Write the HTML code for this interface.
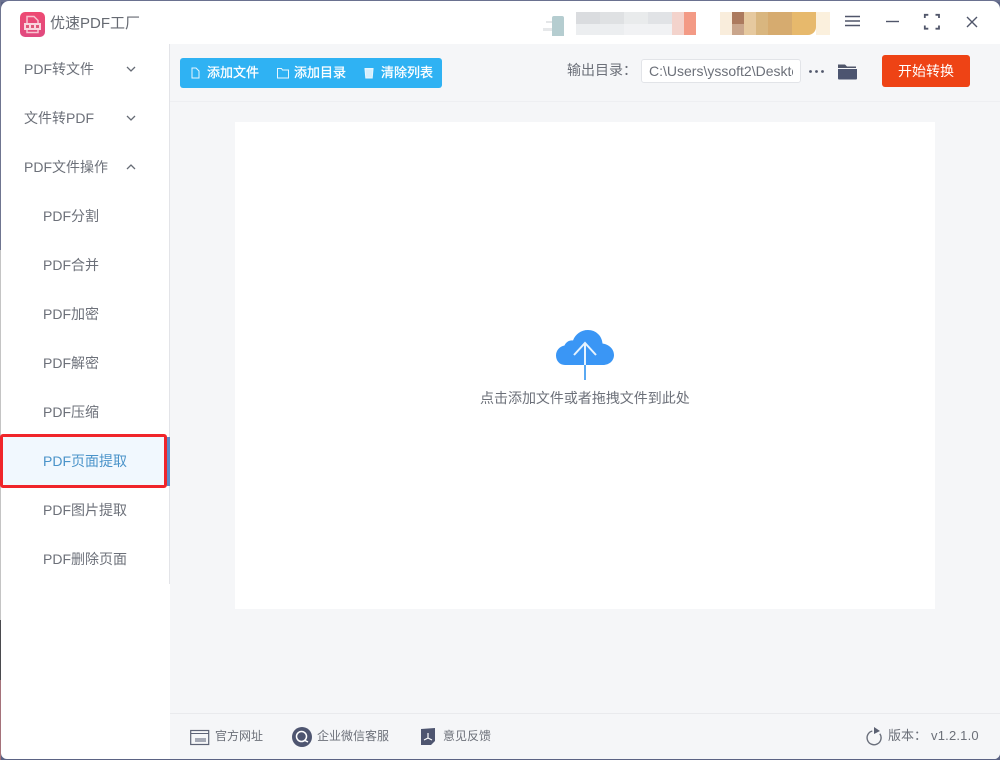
<!DOCTYPE html>
<html lang="zh-CN">
<head>
<meta charset="utf-8">
<title>优速PDF工厂</title>
<style>
*{box-sizing:border-box;margin:0;padding:0}
html,body{width:1000px;height:760px;overflow:hidden;background:#5b6384}
body{position:relative;font-family:"Liberation Sans","Noto Sans CJK SC",sans-serif;color:#5f6470}
.win{position:absolute;left:1px;top:1px;width:999px;height:758px;background:#fff;border-radius:8px 8px 6px 6px;overflow:hidden}
.abs,.t{position:absolute;white-space:nowrap}
.t{line-height:20px}
.main{position:absolute;left:170px;top:44px;width:830px;height:715px;background:#f5f6f8;border-radius:0 0 6px 0}
.side{font-size:14px;color:#6c7079}
.btn{color:#fff;font-size:13px;font-weight:400;-webkit-text-stroke:.3px #fff}
</style>
</head>
<body>
<div class="abs" style="left:0;top:0;width:1000px;height:2px;background:#6a7190"></div>
<div class="abs" style="left:0;top:0;width:1px;height:250px;background:#6f7590"></div>
<div class="abs" style="left:0;top:250px;width:1px;height:370px;background:#c4c4c4"></div>
<div class="abs" style="left:0;top:620px;width:1px;height:60px;background:#4a4a4e"></div>
<div class="abs" style="left:0;top:680px;width:1px;height:80px;background:#a5727a"></div>
<div class="win"></div>
<div class="main"></div>
<div class="abs" style="left:169px;top:44px;width:1px;height:540px;background:#e3e4e8"></div>
<div class="abs" style="left:170px;top:101px;width:830px;height:1px;background:#eeeff2"></div>
<div class="abs" style="left:170px;top:713px;width:830px;height:1px;background:#e9eaed"></div>
<div class="abs" style="left:235px;top:122px;width:700px;height:487px;background:#fff"></div>

<!-- logo -->
<svg class="abs" style="left:20px;top:12px" width="25" height="25" viewBox="0 0 25 25">
<defs><linearGradient id="lg" x1="0" y1="0" x2="0" y2="1"><stop offset="0" stop-color="#ee4a72"/><stop offset="1" stop-color="#e04a80"/></linearGradient></defs>
<rect width="25" height="25" rx="5" fill="url(#lg)"/>
<path d="M7 11V4.500h7l4 4V11M7 18v2.500h11V18" fill="none" stroke="#f8c3d0" stroke-width="1.500"/>
<rect x="4" y="11" width="17" height="7" fill="#f9d5de"/>
<path d="M6 13h3v3H6zM11 13h3v3h-3zM16 13h3v3h-3z" fill="#e0577a"/>
</svg>
<div class="t" style="left:50px;top:14px;font-size:15px;color:#666a72">优速PDF工厂</div>

<!-- blurred title area -->
<div class="abs" style="left:546px;top:21px;width:6px;height:2px;background:#e4e6e8"></div>
<div class="abs" style="left:543px;top:28px;width:9px;height:3px;background:#e6e8ea"></div>
<div class="abs" style="left:552px;top:16px;width:12px;height:20px;background:#b5cdd0;border-radius:2px 2px 0 0"></div>
<div class="abs" style="left:576px;top:12px;width:24px;height:12px;background:#dadcdf"></div>
<div class="abs" style="left:600px;top:12px;width:24px;height:12px;background:#dfe1e3"></div>
<div class="abs" style="left:624px;top:12px;width:24px;height:12px;background:#e9ebec"></div>
<div class="abs" style="left:648px;top:12px;width:24px;height:12px;background:#e1e3e6"></div>
<div class="abs" style="left:576px;top:24px;width:48px;height:11px;background:#eceef0"></div>
<div class="abs" style="left:624px;top:24px;width:48px;height:11px;background:#f1f2f4"></div>
<div class="abs" style="left:672px;top:12px;width:12px;height:23px;background:#f3d3cc"></div>
<div class="abs" style="left:684px;top:12px;width:12px;height:23px;background:#f39a85"></div>
<div class="abs" style="left:720px;top:12px;width:12px;height:23px;background:#f9eddc"></div>
<div class="abs" style="left:732px;top:12px;width:12px;height:12px;background:#ac7a5e"></div>
<div class="abs" style="left:732px;top:24px;width:12px;height:11px;background:#c9a58b"></div>
<div class="abs" style="left:744px;top:12px;width:12px;height:23px;background:#e6c99f"></div>
<div class="abs" style="left:756px;top:12px;width:12px;height:23px;background:#d9b67f"></div>
<div class="abs" style="left:768px;top:12px;width:24px;height:23px;background:#d6ab6f"></div>
<div class="abs" style="left:792px;top:12px;width:24px;height:23px;background:#e7b96c;border-radius:0 0 8px 0"></div>
<div class="abs" style="left:816px;top:12px;width:14px;height:23px;background:#fbf0dd"></div>

<!-- window controls -->
<svg class="abs" style="left:840px;top:10px" width="145" height="24" viewBox="0 0 145 24" fill="none" stroke="#50566a" stroke-width="1.400">
<path d="M5 6.500h15M5 11h15M5 15.500h15"/>
<path d="M46 11.500h13"/>
<path d="M84.800 8V4.800h3.500M95.500 4.800h3.500V8M99 15.500v3.200h-3.500M88.300 18.700h-3.500v-3.200" stroke-width="1.800"/>
<path d="M127 7l10 10M137 7l-10 10"/>
</svg>

<!-- sidebar -->
<div class="t side" style="left:24px;top:59px">PDF转文件</div>
<div class="t side" style="left:24px;top:108px">文件转PDF</div>
<div class="t side" style="left:24px;top:157px">PDF文件操作</div>
<svg class="abs" style="left:125px;top:63px" width="12" height="112" viewBox="0 0 12 112" fill="none" stroke="#666b75" stroke-width="1.300">
<path d="M2 4l4 4 4-4M2 53l4 4 4-4M2 106l4-4 4 4"/>
</svg>
<div class="t side" style="left:43px;top:206px">PDF分割</div>
<div class="t side" style="left:43px;top:255px">PDF合并</div>
<div class="t side" style="left:43px;top:304px">PDF加密</div>
<div class="t side" style="left:43px;top:353px">PDF解密</div>
<div class="t side" style="left:43px;top:402px">PDF压缩</div>
<div class="abs" style="left:0;top:434px;width:167px;height:54px;background:#f1f8fe;border:3px solid #f0252a;border-radius:3px"></div>
<div class="abs" style="left:167px;top:437px;width:3px;height:49px;background:#5b8cc8"></div>
<div class="t side" style="left:43px;top:451px;color:#4a93c9">PDF页面提取</div>
<div class="t side" style="left:43px;top:500px">PDF图片提取</div>
<div class="t side" style="left:43px;top:549px">PDF删除页面</div>

<!-- toolbar -->
<div class="abs" style="left:180px;top:58px;width:262px;height:30px;background:#2fb2f3;border-radius:3px"></div>
<svg class="abs" style="left:190px;top:66px" width="190" height="14" viewBox="0 0 190 14" fill="none" stroke="#e8f6fe" stroke-width="1">
<path d="M2 2h4l3 3v7H2z"/>
<path d="M87.500 2.500h4l1 1.500h6v8h-11z"/>
<path d="M175 3h8l-.8 9h-6.400zM174.500 2.500h9" fill="#d5eefc"/>
</svg>
<div class="t btn" style="left:207px;top:63px">添加文件</div>
<div class="t btn" style="left:294px;top:63px">添加目录</div>
<div class="t btn" style="left:381px;top:63px">清除列表</div>

<div class="t" style="left:567px;top:60px;font-size:14px;color:#6c7079">输出目录：</div>
<div class="abs" style="left:641px;top:59px;width:160px;height:24px;background:#fff;border:1px solid #e2e4e8;border-radius:3px"></div>
<div class="abs" style="left:649px;top:60px;width:144px;height:22px;overflow:hidden">
<div class="t" style="left:0;top:1px;font-size:14px;color:#6c7079">C:\Users\yssoft2\Desktop</div>
</div>
<svg class="abs" style="left:808px;top:62px" width="50" height="20" viewBox="0 0 50 20">
<circle cx="2.500" cy="9.500" r="1.400" fill="#50566a"/><circle cx="8.500" cy="9.500" r="1.400" fill="#50566a"/><circle cx="14.500" cy="9.500" r="1.400" fill="#50566a"/>
<path d="M30 2.500h7l2 2h9v1.500H30z" fill="#50566a"/>
<path d="M30 7h19v9.500a1 1 0 0 1-1 1H31a1 1 0 0 1-1-1z" fill="#4c5570"/>
</svg>
<div class="abs" style="left:882px;top:55px;width:88px;height:32px;background:#ee4315;border-radius:3px"></div>
<div class="t btn" style="left:898px;top:61px;width:60px;font-size:14px;-webkit-text-stroke:0">开始转换</div>

<!-- upload -->
<svg class="abs" style="left:555px;top:328px" width="60" height="54" viewBox="0 0 60 54">
<path d="M10 37C4.500 37 1 32.500 1 27.500 1 22.500 4.500 18.500 9.500 17.500 11 14 14.500 12 18 12.500 20.500 6 26 2 33 2 41 2 47 8 47.500 15.500 54 16.500 59 21 59 27 59 32.500 54.500 37 48 37z" fill="#3a96f5"/>
<path d="M30 37V15M19 27L30 15l11 12" fill="none" stroke="#e6f3fe" stroke-width="2"/>
<path d="M30 37v15" stroke="#5aa9f2" stroke-width="2"/>
</svg>
<div class="t" style="left:480px;top:388px;font-size:14px;letter-spacing:-.02px;color:#6c7079">点击添加文件或者拖拽文件到此处</div>

<!-- footer -->
<svg class="abs" style="left:190px;top:728px" width="20" height="18" viewBox="0 0 20 18" fill="none">
<rect x=".7" y="2.500" width="18" height="14" stroke="#5d6376" stroke-width="1.200"/>
<path d="M1 5.500h18" stroke="#5d6376"/>
<rect x="5" y="10" width="11" height="4" fill="#a5a9b5"/>
</svg>
<div class="t" style="left:215px;top:726px;font-size:12px;color:#6c7079">官方网址</div>
<svg class="abs" style="left:292px;top:727px" width="20" height="20" viewBox="0 0 20 20">
<circle cx="10" cy="10" r="10" fill="#4e5570"/>
<circle cx="9.500" cy="9.500" r="5" fill="none" stroke="#fff" stroke-width="1.500"/>
<path d="M12 13l4 2" stroke="#fff" stroke-width="1.500"/>
</svg>
<div class="t" style="left:317px;top:726px;font-size:12px;color:#6c7079">企业微信客服</div>
<svg class="abs" style="left:421px;top:728px" width="14" height="18" viewBox="0 0 14 18">
<path d="M0 1l14-1v13l-4 4H0z" fill="#4e5570"/>
<path d="M7 5v5M3 12l4-2 4 2" fill="none" stroke="#fff" stroke-width="1.200"/>
</svg>
<div class="t" style="left:443px;top:726px;font-size:12px;color:#6c7079">意见反馈</div>
<svg class="abs" style="left:865px;top:727px" width="18" height="19" viewBox="0 0 18 19" fill="none">
<path d="M5 5a7 7 0 1 0 8 0" stroke="#6a6f7b" stroke-width="1.400" transform="rotate(20 9 11)"/>
<path d="M9 0l6 4-6 3z" fill="#5b6172"/>
</svg>
<div class="t" style="left:888px;top:726px;font-size:13px;color:#6c7079">版本：</div>
<div class="t" style="left:931px;top:726px;font-size:13px;letter-spacing:.2px;color:#6c7079">v1.2.1.0</div>
</body>
</html>
